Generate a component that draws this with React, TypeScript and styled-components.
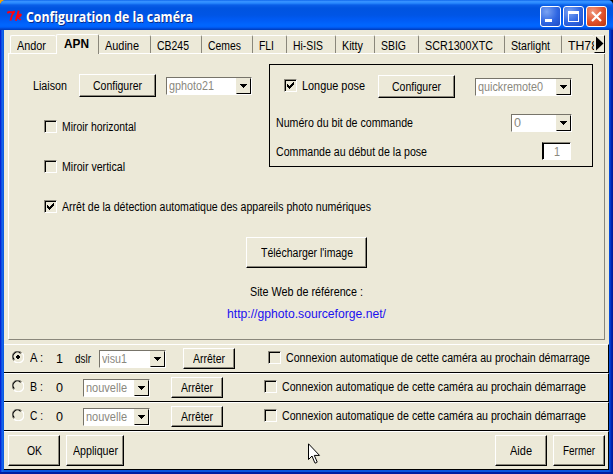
import React, { useLayoutEffect, useRef, useState } from 'react';
import styled, { createGlobalStyle, css } from 'styled-components';

const face = '#ece9d8';
const shade = '#8a877b';

const GlobalStyle = createGlobalStyle`
  * { box-sizing: border-box; }
  body { margin: 0; background: #000; overflow: hidden; }
  button { font: inherit; color: inherit; }
`;

const Window = styled.div`
  width: 613px;
  height: 474px;
  display: flex;
  flex-direction: column;
  padding: 0 4px 4px;
  border-radius: 6px 5px 0 0;
  background: linear-gradient(90deg, #0019cf 0, #0831d9 1px, #166aee 2px, #0855dd 4px, #0855dd 609px, #0441d8 610px, #001da0 612px);
  box-shadow: inset 0 -2px #001ea0;
  font: 12px/14px 'Liberation Sans', Arial, sans-serif;
  color: #000;
`;

const Backdrop = styled.div`
  width: 613px;
  height: 474px;
  background: linear-gradient(90deg, #f5a300 50%, #000 50%);
`;

const TitleBar = styled.header`
  flex: none;
  height: 30px;
  margin: 0 -4px;
  padding: 6px 6px 0 7px;
  display: flex;
  align-items: flex-start;
  border-radius: 6px 5px 0 0;
  background: linear-gradient(#0058e6 0, #3a93ff 1px, #2a8bff 3px, #0a5fe8 5px, #0054e0 8px, #0055e5 15px, #005bf5 20px, #0066ff 25px, #0061fc 27px, #0046cf 29px, #003bb8 30px);
`;

const TitleText = styled.h1`
  flex: 1;
  margin: 1px 0 0 3px;
  font: bold 14px/20px 'Open Sans', 'Noto Sans', sans-serif;
  color: #fff;
  text-shadow: 1px 1px #0b2f8c;
`;

const TkLogo = styled.svg`
  width: 16px;
  height: 12px;
  margin-top: 4px;
`;

const CaptionButton = styled.button<{ $close?: boolean }>`
  width: 21px;
  height: 21px;
  margin-left: 2px;
  padding: 0;
  border: 1px solid #fff;
  border-radius: 3px;
  background: ${p => p.$close
    ? 'radial-gradient(circle at 30% 25%, #f09a80, #e1502a 55%, #b93610)'
    : 'radial-gradient(circle at 30% 25%, #7ba3f2, #2f66e2 55%, #1d4bc4)'};
  svg { display: block; }
`;

const Client = styled.main`
  flex: 1;
  display: flex;
  flex-direction: column;
  background: ${face};
`;

const TabStrip = styled.nav`
  flex: none;
  display: flex;
  align-items: flex-end;
  height: 24px;
  padding: 0 4px;
  background: linear-gradient(#fff, #fff) 4px 23px / 597px 1px no-repeat;
`;

const Tab = styled.div<{ $w: number; $on?: boolean; $first?: boolean; $last?: boolean }>`
  flex: none;
  width: ${p => p.$w}px;
  height: 18px;
  margin-bottom: 1px;
  padding: 3px 0 0 6px;
  overflow: hidden;
  border-top: 1px solid #fff;
  border-right: ${p => (p.$last ? '0' : `1px solid ${shade}`)};
  border-top-right-radius: 2px;
  ${p => p.$first && css`
    margin-left: 2px;
    border-left: 1px solid #fff;
    border-right: 0;
    border-top-left-radius: 2px;
  `}
  ${p => p.$on && css`
    height: 20px;
    margin-bottom: 0;
    padding: 2px 0 0 7px;
    border-left: 1px solid #fff;
    border-right: 1px solid ${shade};
    border-top-left-radius: 2px;
    background: ${face};
    font-weight: bold;
  `}
`;

const ScrollTabs = styled.button`
  width: 11px;
  height: 18px;
  margin-bottom: 1px;
  padding: 0;
  border: 1px solid;
  border-color: #fff #000 #000 ${face};
  background: ${face};
  svg { display: block; }
`;

const Page = styled.section`
  flex: none;
  height: 286px;
  margin: 0 4px 4px;
  border-left: 1px solid #fff;
  border-right: 1px solid ${shade};
  border-bottom: 1px solid ${shade};
`;

const TopArea = styled.div`
  display: flex;
  height: 146px;
`;

const LeftColumn = styled.div`
  width: 260px;
`;

const Line = styled.div<{ $h: number; $pl?: number; $pt?: number }>`
  display: flex;
  align-items: flex-start;
  height: ${p => p.$h}px;
  padding-left: ${p => p.$pl ?? 0}px;
  padding-top: ${p => p.$pt ?? 0}px;
`;

const Group = styled.fieldset`
  width: 324px;
  height: 103px;
  margin: 10px 0 0;
  padding: 0;
  border: 1px solid #000;
`;

const TextBox = styled.span<{ $w: number; $ml?: number; $mt?: number }>`
  display: block;
  flex: none;
  width: ${p => p.$w}px;
  height: 14px;
  margin-left: ${p => p.$ml ?? 0}px;
  margin-top: ${p => p.$mt ?? 0}px;
  text-align: left;
`;

const TextRun = styled.span`
  display: inline-block;
  white-space: pre;
  transform-origin: 0 0;
`;

interface FitProps {
  w: number;
  ml?: number;
  mt?: number;
  children: string;
}

// Condenses a run of text so that it fills exactly the given width.
function Fit({ w, ml, mt, children }: FitProps) {
  const run = useRef<HTMLSpanElement>(null);
  const [scale, setScale] = useState(1);
  useLayoutEffect(() => {
    if (run.current) setScale(w / run.current.getBoundingClientRect().width * scale);
  }, [w, children]);
  return (
    <TextBox $w={w} $ml={ml} $mt={mt}>
      <TextRun ref={run} style={{ transform: `scaleX(${scale})` }}>{children}</TextRun>
    </TextBox>
  );
}

const PushButton = styled.button<{ $w: number; $h: number; $ml?: number; $mt?: number }>`
  flex: none;
  display: flex;
  align-items: center;
  justify-content: center;
  width: ${p => p.$w}px;
  height: ${p => p.$h}px;
  margin-left: ${p => p.$ml ?? 0}px;
  margin-top: ${p => p.$mt ?? 0}px;
  padding: 1px 0 0;
  border: 1px solid;
  border-color: #fff #000 #000 #fff;
  box-shadow: inset -1px -1px ${shade};
  background: ${face};
`;

const ComboFrame = styled.div<{ $w: number; $ml: number; $mt?: number }>`
  flex: none;
  display: flex;
  justify-content: space-between;
  width: ${p => p.$w}px;
  height: 18px;
  margin-left: ${p => p.$ml}px;
  margin-top: ${p => p.$mt ?? 0}px;
  border: 1px solid;
  border-color: #77746a #fff #fff #77746a;
  background: #fff;
  color: #8a887e;
`;

const ComboArrow = styled.span`
  width: 15px;
  height: 16px;
  border: 1px solid;
  border-color: ${face} #000 #000 ${face};
  background: ${face};
  svg { display: block; }
`;

interface ComboProps { w: number; ml: number; mt?: number; text: string; tw: number }

const Combo = ({ w, ml, mt, text, tw }: ComboProps) => (
  <ComboFrame $w={w} $ml={ml} $mt={mt}>
    <Fit w={tw} ml={2} mt={1}>{text}</Fit>
    <ComboArrow>
      <svg width="13" height="14"><path d="M3 5h7v1h-1v1h-1v1h-1v1h-1v-1h-1v-1h-1v-1h-1z" /></svg>
    </ComboArrow>
  </ComboFrame>
);

const CheckFrame = styled.span<{ $ml?: number; $mt?: number }>`
  flex: none;
  width: 13px;
  height: 13px;
  margin-left: ${p => p.$ml ?? 0}px;
  margin-top: ${p => p.$mt ?? 0}px;
  border: 1px solid;
  border-color: ${shade} #fff #fff ${shade};
  box-shadow: inset 1px 1px #000;
  svg { display: block; }
`;

const Check = ({ on, ml, mt }: { on?: boolean; ml?: number; mt?: number }) => (
  <CheckFrame $ml={ml} $mt={mt}>
    {on && (
      <svg width="11" height="11" shapeRendering="crispEdges">
        <path d="M2 4h1v1h1v1h1v-1h1v-1h1v-1h1v-1h1v3h-1v1h-1v1h-1v1h-1v1h-1v-1h-1v-1h-1z" />
      </svg>
    )}
  </CheckFrame>
);

const Radio = ({ on }: { on?: boolean }) => (
  <svg width="12" height="12" viewBox="0 0 12 12">
    <path d="M1.7 9.7A5.3 5.3 0 0 1 9.7 1.7" fill="none" stroke={shade} />
    <path d="M2.3 8.6A4.4 4.4 0 0 1 8.6 2.3" fill="none" stroke="#000" strokeWidth="1.2" />
    <path d="M10.2 2.2A5.3 5.3 0 0 1 2.2 10.2" fill="none" stroke="#fff" strokeWidth="1.3" />
    {on && <path d="M5 4h2v1h1v2h-1v1h-2v-1h-1v-2h1z" />}
  </svg>
);

const Entry = styled.div`
  width: 29px;
  height: 18px;
  margin-left: 115px;
  border: 1px solid;
  border-color: ${shade} #fff #fff #000;
  box-shadow: inset 1px 1px #000;
  background: #fff;
  color: #8a887e;
`;

const LowerArea = styled.div`
  display: flex;
  flex-direction: column;
`;

const SiteLink = styled.a`
  display: block;
  margin: 8px 0 0 218px;
  font-size: 12px;
  color: #1b10f0;
  text-decoration: none;
`;

const CameraRow = styled.div`
  flex: none;
  display: flex;
  align-items: flex-start;
  height: 29px;
  padding: 3px 0 0 8px;
  border-top: 1px solid #fff;
  border-bottom: 1px solid #000;
  border-right: 1px solid #000;
  > svg { flex: none; margin-top: 3px; }
`;

const Footer = styled.footer`
  flex: 1;
  display: flex;
  align-items: flex-start;
  padding: 3px 3px 0 4px;
  border-top: 1px solid #fff;
  border-right: 1px solid #000;
  border-bottom: 1px solid #000;
`;

const Spring = styled.div`
  flex: 1;
`;

const Pointer = styled.svg`
  position: absolute;
  left: 308px;
  top: 443px;
`;

const tabs = [
  { name: 'Andor', w: 46, tw: 29 },
  { name: 'APN', w: 43, tw: 25 },
  { name: 'Audine', w: 52, tw: 34 },
  { name: 'CB245', w: 51, tw: 32 },
  { name: 'Cemes', w: 51, tw: 33 },
  { name: 'FLI', w: 34, tw: 15 },
  { name: 'Hi-SIS', w: 49, tw: 30 },
  { name: 'Kitty', w: 39, tw: 21 },
  { name: 'SBIG', w: 44, tw: 25 },
  { name: 'SCR1300XTC', w: 86, tw: 68 },
  { name: 'Starlight', w: 57, tw: 39 },
  { name: 'TH78', w: 32, tw: 30 },
];

const cameras = [
  { id: 'A :', count: '1', device: 'dslr', view: 'visu1', vw: 25, on: true },
  { id: 'B :', count: '0', device: '', view: 'nouvelle', vw: 41, on: false },
  { id: 'C :', count: '0', device: '', view: 'nouvelle', vw: 41, on: false },
];

export default function App() {
  return (
    <Backdrop>
      <GlobalStyle />
      <Window>
        <TitleBar>
          <TkLogo viewBox="0 0 16 12" fill="none" stroke="#ff0010" strokeLinejoin="round">
            <path d="M0.3 3.2Q1.5 1.6 3.2 2.1T7.2 1.6Q4.2 5 3.6 10.5" strokeWidth="2" />
            <path d="M11.8 0.6L8.8 10.8" strokeWidth="2" />
            <path d="M9.8 7.2Q12 4 14 4.4Q14.4 6.4 10.6 7Q11.6 9.6 14 9.4" strokeWidth="1.5" />
          </TkLogo>
          <TitleText><Fit w={167}>Configuration de la caméra</Fit></TitleText>
          <CaptionButton aria-label="Réduire">
            <svg width="19" height="19"><path d="M4 12h7v3h-7z" fill="#fff" /></svg>
          </CaptionButton>
          <CaptionButton aria-label="Agrandir">
            <svg width="19" height="19"><path fillRule="evenodd" d="M4 4h11v11h-11zM5 7v7h9v-7z" fill="#fff" /></svg>
          </CaptionButton>
          <CaptionButton $close aria-label="Quitter">
            <svg width="19" height="19"><path d="M5 5l9 9M14 5l-9 9" stroke="#fff" strokeWidth="2.2" /></svg>
          </CaptionButton>
        </TitleBar>
        <Client>
          <TabStrip>
            {tabs.map((t, i) => (
              <Tab key={t.name} $w={t.w} $first={i === 0} $on={i === 1} $last={i === tabs.length - 1}>
                <Fit w={t.tw}>{t.name}</Fit>
              </Tab>
            ))}
            <ScrollTabs aria-label="Suivant">
              <svg width="9" height="16"><path d="M1 0.5L8.5 7.5L1 14.5z" /></svg>
            </ScrollTabs>
          </TabStrip>
          <Page>
            <TopArea>
              <LeftColumn>
                <Line $h={66} $pl={24} $pt={20}>
                  <Fit w={34} mt={5}>Liaison</Fit>
                  <PushButton $w={77} $h={23} $ml={12}><Fit w={49}>Configurer</Fit></PushButton>
                  <Combo w={86} ml={10} mt={3} text="gphoto21" tw={45} />
                </Line>
                <Line $h={40} $pl={35}>
                  <Check /><Fit w={74} ml={5}>Miroir horizontal</Fit>
                </Line>
                <Line $h={40} $pl={35}>
                  <Check /><Fit w={63} ml={5}>Miroir vertical</Fit>
                </Line>
              </LeftColumn>
              <Group>
                <Line $h={49} $pl={14} $pt={10}>
                  <Check on mt={4} />
                  <Fit w={63} ml={5} mt={4}>Longue pose</Fit>
                  <PushButton $w={77} $h={23} $ml={13}><Fit w={49}>Configurer</Fit></PushButton>
                  <Combo w={97} ml={20} mt={3} text="quickremote0" tw={65} />
                </Line>
                <Line $h={28} $pl={6}>
                  <Fit w={137} mt={2}>Numéro du bit de commande</Fit>
                  <Combo w={61} ml={98} text="0" tw={7} />
                </Line>
                <Line $h={20} $pl={6}>
                  <Fit w={151} mt={3}>Commande au début de la pose</Fit>
                  <Entry><Fit w={6} ml={11} mt={2}>1</Fit></Entry>
                </Line>
              </Group>
            </TopArea>
            <LowerArea>
              <Line $h={37} $pl={35}>
                <Check on /><Fit w={309} ml={5}>Arrêt de la détection automatique des appareils photo numériques</Fit>
              </Line>
              <PushButton $w={121} $h={31} $ml={237}><Fit w={92}>Télécharger l'image</Fit></PushButton>
              <Fit w={113} ml={241} mt={17}>Site Web de référence :</Fit>
              <SiteLink href="#"><Fit w={159}>http://gphoto.sourceforge.net/</Fit></SiteLink>
            </LowerArea>
          </Page>
          {cameras.map(c => (
            <CameraRow key={c.id}>
              <Radio on={c.on} />
              <Fit w={13} ml={6} mt={3}>{c.id}</Fit>
              <Fit w={7} ml={13} mt={4}>{c.count}</Fit>
              {c.device && <Fit w={16} ml={12} mt={4}>{c.device}</Fit>}
              <Combo w={67} ml={c.device ? 8 : 20} mt={2} text={c.view} tw={c.vw} />
              <PushButton $w={52} $h={21} $ml={c.device ? 17 : 21}><Fit w={32}>Arrêter</Fit></PushButton>
              <Check ml={c.device ? 33 : 41} mt={3} />
              <Fit w={304} ml={5} mt={3}>Connexion automatique de cette caméra au prochain démarrage</Fit>
            </CameraRow>
          ))}
          <Footer>
            <PushButton $w={52} $h={31}><Fit w={15}>OK</Fit></PushButton>
            <PushButton $w={58} $h={31} $ml={6}><Fit w={45}>Appliquer</Fit></PushButton>
            <Spring />
            <PushButton $w={52} $h={31}><Fit w={22}>Aide</Fit></PushButton>
            <PushButton $w={52} $h={31} $ml={6}><Fit w={32}>Fermer</Fit></PushButton>
          </Footer>
        </Client>
      </Window>
      <Pointer width="13" height="22" viewBox="0 0 13 22">
        <path d="M0.5 0.8V16.5L4 13L6.8 19.8Q8.2 20.8 9.2 19L6.3 12.4H11.5Z" fill="#fff" stroke="#000" />
      </Pointer>
    </Backdrop>
  );
}
